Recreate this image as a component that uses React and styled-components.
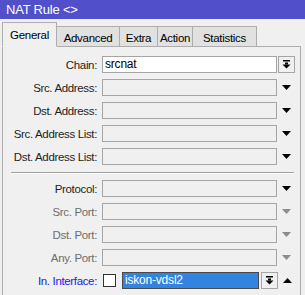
import React from "react";
import styled, { createGlobalStyle } from "styled-components";

const GlobalStyle = createGlobalStyle`
  html, body {
    margin: 0;
    padding: 0;
    background: #f0f0f0;
    font-family: "Liberation Sans", Arial, sans-serif;
  }
`;

const Window = styled.div`
  width: 305px;
  height: 295px;
  overflow: hidden;
  background: #f0f0f0;
`;

const TitleBar = styled.div`
  height: 19px;
  background: #524fcb;
  color: #fff;
  font-size: 13px;
  letter-spacing: -0.2px;
  line-height: 20px;
  padding-left: 6px;
`;

const TabStrip = styled.div`
  display: flex;
  align-items: flex-end;
  height: 25px;
  margin-top: 3px;
  padding-left: 2px;
  margin-bottom: -1px;
`;

const Tab = styled.div`
  box-sizing: border-box;
  width: ${({ $w }) => $w}px;
  height: ${({ $active }) => ($active ? 25 : 21)}px;
  border: 1px solid #adadad;
  border-left-width: ${({ $first }) => ($first ? 1 : 0)}px;
  border-bottom: ${({ $active }) => ($active ? "1px solid #f0f0f0" : "1px solid #adadad")};
  background: ${({ $active }) => ($active ? "#f0f0f0" : "#e1e1e1")};
  color: #000;
  font-size: 11.5px;
  letter-spacing: -0.3px;
  display: flex;
  align-items: center;
  justify-content: center;
  position: relative;
  z-index: ${({ $active }) => ($active ? 1 : 0)};
  padding-top: ${({ $active }) => ($active ? 0 : 2)}px;
`;

const Panel = styled.div`
  box-sizing: border-box;
  margin-left: 2px;
  width: 299px;
  height: 260px;
  border: 1px solid #adadad;
  border-bottom: none;
  padding-top: 9px;
  display: flex;
  flex-direction: column;
  gap: 6px;
`;

const Row = styled.div`
  display: flex;
  align-items: center;
  height: 17px;
  flex-shrink: 0;
`;

const Label = styled.div`
  width: 94px;
  margin-right: 5px;
  text-align: right;
  font-size: 11.5px;
  letter-spacing: -0.35px;
  white-space: nowrap;
  color: ${({ $tone }) =>
    $tone === "off" ? "#6d6d6d" : $tone === "link" ? "#2121e6" : "#1e1e1e"};
`;

const Field = styled.div`
  box-sizing: border-box;
  width: ${({ $w }) => $w || 175}px;
  height: 17px;
  border: 1px solid ${({ $sel }) => ($sel ? "#4a4a4a" : "#a5a5a5")};
  background: ${({ $sel, $white }) => ($sel ? "#3383e0" : $white ? "#fff" : "#f0f0f0")};
  color: ${({ $sel }) => ($sel ? "#fff" : "#000")};
  font-size: 12px;
  letter-spacing: -0.2px;
  line-height: 15px;
  padding-left: 2px;
`;

const Side = styled.div`
  width: 17px;
  height: 17px;
  margin-left: 1px;
  display: flex;
  align-items: center;
  justify-content: center;
`;

const PickButton = styled.div`
  box-sizing: border-box;
  width: 17px;
  height: 17px;
  margin-left: ${({ $gap }) => $gap || 1}px;
  border: 1px solid #a5a5a5;
  background: #f0f0f0;
  display: flex;
  align-items: center;
  justify-content: center;
`;

const Check = styled.div`
  box-sizing: border-box;
  width: 13px;
  height: 13px;
  margin-left: 1px;
  margin-right: 6px;
  border: 1px solid #333;
  background: #fff;
`;

const Separator = styled.div`
  height: 1px;
  border-bottom: 1px solid #fff;
  background: #a0a0a0;
  margin: 1px 6px 0 8px;
  flex-shrink: 0;
`;

const Arrow = ({ up, color = "#000" }) => (
  <svg width="9" height="5" viewBox="0 0 9 5">
    <polygon points={up ? "0,5 9,5 4.5,0" : "0,0 9,0 4.5,5"} fill={color} />
  </svg>
);

const DropIcon = () => (
  <svg width="9" height="9" viewBox="0 0 9 9">
    <rect x="1" y="0" width="7" height="1.5" fill="#000" />
    <rect x="3" y="2.5" width="3" height="2" fill="#000" />
    <polygon points="0.5,4.5 8.5,4.5 4.5,8.5" fill="#000" />
  </svg>
);

const tabs = [
  { name: "General", w: 55, active: true },
  { name: "Advanced", w: 63 },
  { name: "Extra", w: 38 },
  { name: "Action", w: 35 },
  { name: "Statistics", w: 64 },
];

const upper = ["Src. Address", "Dst. Address", "Src. Address List", "Dst. Address List"];
const ports = ["Src. Port", "Dst. Port", "Any. Port"];

export default function App() {
  return (
    <Window>
      <GlobalStyle />
      <TitleBar>NAT Rule &lt;&gt;</TitleBar>
      <TabStrip>
        {tabs.map((t, i) => (
          <Tab key={t.name} $w={t.w} $active={t.active} $first={i === 0}>
            {t.name}
          </Tab>
        ))}
      </TabStrip>
      <Panel>
        <Row>
          <Label>Chain:</Label>
          <Field $white>srcnat</Field>
          <PickButton>
            <DropIcon />
          </PickButton>
        </Row>
        {upper.map((l) => (
          <Row key={l}>
            <Label>{l}:</Label>
            <Field />
            <Side>
              <Arrow />
            </Side>
          </Row>
        ))}
        <Separator />
        <Row>
          <Label>Protocol:</Label>
          <Field />
          <Side>
            <Arrow />
          </Side>
        </Row>
        {ports.map((l) => (
          <Row key={l}>
            <Label $tone="off">{l}:</Label>
            <Field />
            <Side>
              <Arrow color="#8c8c8c" />
            </Side>
          </Row>
        ))}
        <Row>
          <Label $tone="link">In. Interface:</Label>
          <Check />
          <Field $sel $w={137}>iskon-vdsl2</Field>
          <PickButton $gap={2}>
            <DropIcon />
          </PickButton>
          <Side>
            <Arrow up />
          </Side>
        </Row>
        <Row>
          <Label />
          <Field />
        </Row>
      </Panel>
    </Window>
  );
}
